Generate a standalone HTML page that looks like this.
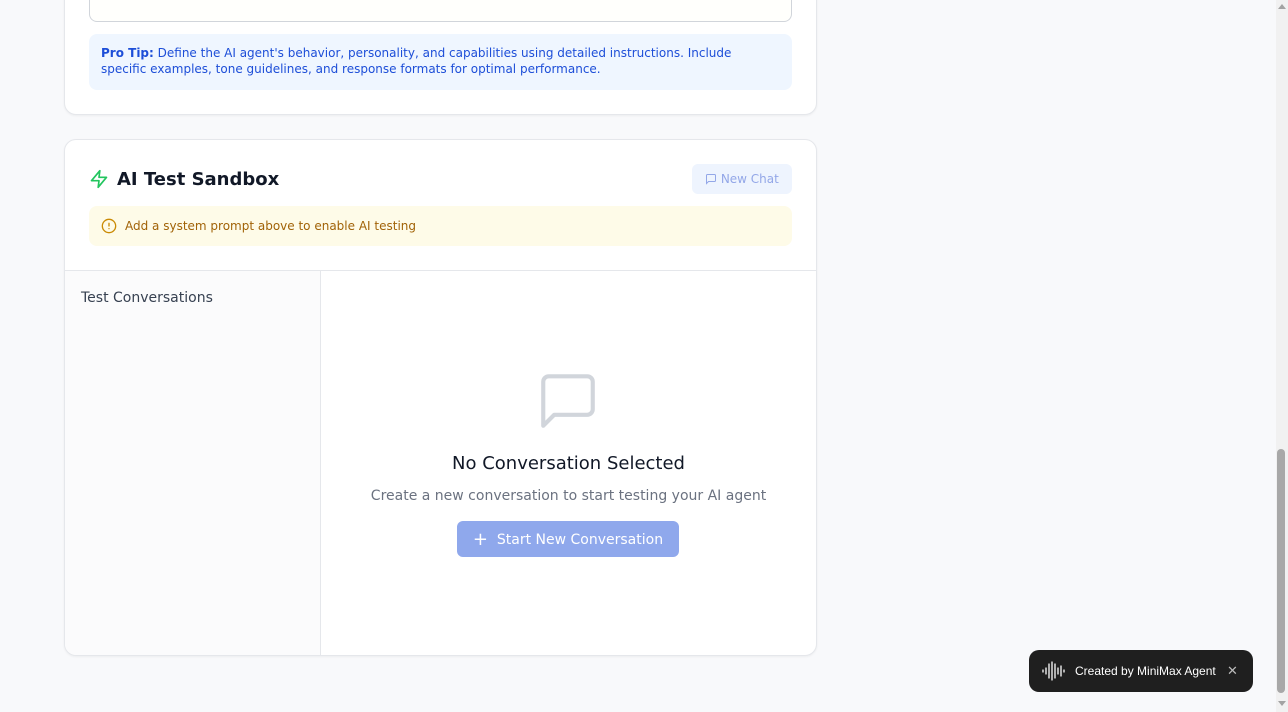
<!DOCTYPE html>
<html><head><meta charset="utf-8"><style>
*{box-sizing:border-box;margin:0;padding:0}
body{width:1288px;height:712px;overflow:hidden;background:#f8f9fb;font-family:"DejaVu Sans",sans-serif;position:relative}
.card{position:absolute;left:64px;width:753px;background:#fff;border:1px solid #e5e7eb;border-radius:12px;box-shadow:0 1px 2px rgba(0,0,0,.05)}
.tip{position:absolute;left:24px;width:703px;top:34px;height:56px;background:#eff6ff;border-radius:8px;padding:11px 12px;font-size:12px;line-height:16px;color:#1d4ed8}
.sb{position:absolute;right:0;top:0;width:12px;height:712px;background:#f1f1f1}
</style></head><body>
<div class="card" style="top:-20px;height:135px">
  <div style="position:absolute;left:24px;top:0;width:703px;height:41px;border:1px solid #d1d5db;border-top:none;border-radius:0 0 8px 8px;background:#fffffc"></div>
  <div class="tip" style="top:53px"><b>Pro Tip:</b> Define the AI agent's behavior, personality, and capabilities using detailed instructions. Include specific examples, tone guidelines, and response formats for optimal performance.</div>
</div>
<div class="card" style="top:139px;height:517px;overflow:hidden">
  <svg style="position:absolute;left:24px;top:28px" width="20" height="22" viewBox="0 0 24 24" fill="none" stroke="#22c55e" stroke-width="2" stroke-linejoin="round" stroke-linecap="round"><path d="M13 2L3 14h9l-1 8 10-12h-9l1-8z"/></svg>
  <div style="position:absolute;left:52px;top:29px;font-size:18px;font-weight:bold;color:#111827">AI Test Sandbox</div>
  <div style="position:absolute;left:627px;top:24px;width:100px;height:30px;background:#eef4fe;border-radius:6px;font-size:12px;color:#93a7e8;line-height:30px;padding-left:13px">
    <svg style="vertical-align:-2px" width="12" height="12" viewBox="0 0 24 24" fill="none" stroke="#93a7e8" stroke-width="2"><path d="M21 15a2 2 0 0 1-2 2H7l-4 4V5a2 2 0 0 1 2-2h14a2 2 0 0 1 2 2z"/></svg> New Chat</div>
  <div style="position:absolute;left:24px;top:66px;width:703px;height:40px;background:#fefbe8;border-radius:8px;font-size:12px;color:#a16207;line-height:40px;padding-left:36px">
    <svg style="position:absolute;left:12px;top:12px" width="16" height="16" viewBox="0 0 24 24" fill="none" stroke="#ca8a04" stroke-width="2" stroke-linecap="round"><circle cx="12" cy="12" r="10"/><path d="M12 8v4M12 16h.01"/></svg>
    Add a system prompt above to enable AI testing</div>
  <div style="position:absolute;left:0;top:130px;width:753px;height:1px;background:#e5e7eb"></div>
  <div style="position:absolute;left:0;top:131px;width:256px;height:386px;background:#fbfbfc;border-right:1px solid #e5e7eb">
    <div style="position:absolute;left:16px;top:19px;font-size:14px;color:#374151">Test Conversations</div>
  </div>
  <svg style="position:absolute;left:470px;top:228px" width="66" height="66" viewBox="0 0 24 24" fill="none" stroke="#d1d5db" stroke-width="1.5" stroke-linejoin="round"><path d="M21 15a2 2 0 0 1-2 2H7l-4 4V5a2 2 0 0 1 2-2h14a2 2 0 0 1 2 2z"/></svg>
  <div style="position:absolute;left:255px;width:497px;top:313px;text-align:center;font-size:18px;color:#111827">No Conversation Selected</div>
  <div style="position:absolute;left:255px;width:497px;top:348px;text-align:center;font-size:14px;color:#6b7280">Create a new conversation to start testing your AI agent</div>
  <div style="position:absolute;left:392px;top:381px;width:222px;height:36px;background:#8fa8ec;border-radius:6px;color:#fff;font-size:14px;line-height:37px;text-align:center"><span style="font-size:18px;vertical-align:-1px">+</span>&nbsp; Start New Conversation</div>
</div>
<div style="position:absolute;left:1029px;top:650px;width:224px;height:42px;background:#1f1f1f;border-radius:10px;color:#fff;font-family:'Liberation Sans',sans-serif;font-size:12px;line-height:42px;padding-left:46px">
  <svg style="position:absolute;left:13px;top:11px" width="24" height="20" viewBox="0 0 24 20" fill="none" stroke="#fff" stroke-width="1.3" stroke-linecap="round"><path d="M1 11v-2M4 13V7M7 17V3M10 19V1M13 17V3M16 13V7M19 15V5M22 11V9"/></svg>
  Created by MiniMax Agent<span style="position:absolute;left:198px;color:#bbb;font-size:13px">✕</span></div>
<div class="sb"><div style="position:absolute;left:1px;top:449px;width:8px;height:244px;background:#a8a8a8;border-radius:4px"></div>
<div style="position:absolute;left:2px;top:4px;border:4px solid transparent;border-bottom:5px solid #a3a3a3;border-top:none"></div>
<div style="position:absolute;left:2px;top:701px;border:4px solid transparent;border-top:5px solid #a3a3a3;border-bottom:none"></div></div>
</body></html>
